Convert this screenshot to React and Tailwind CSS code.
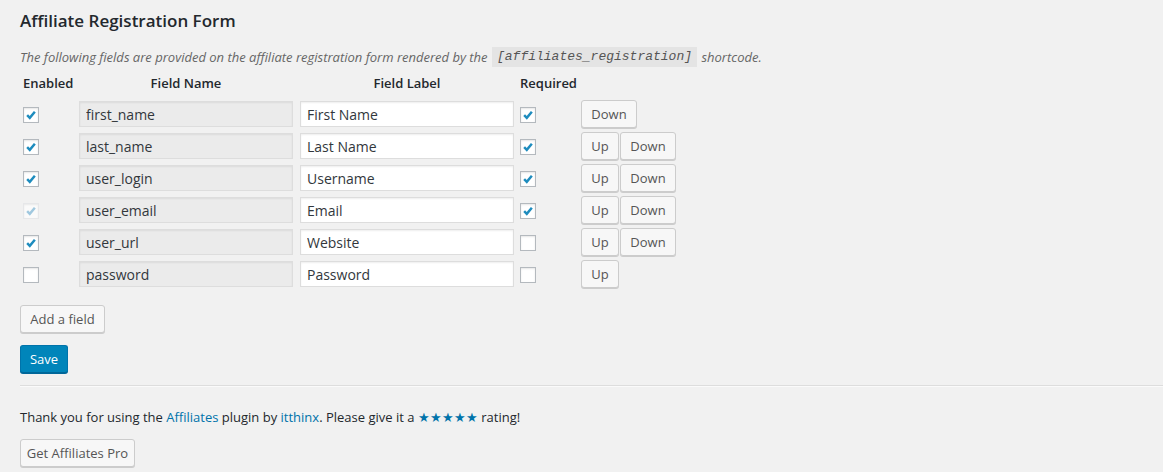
const fields = [
  { name: 'first_name', label: 'First Name', enabled: true, required: true, up: false, down: true },
  { name: 'last_name', label: 'Last Name', enabled: true, required: true, up: true, down: true },
  { name: 'user_login', label: 'Username', enabled: true, required: true, up: true, down: true },
  { name: 'user_email', label: 'Email', enabled: true, required: true, up: true, down: true, locked: true },
  { name: 'user_url', label: 'Website', enabled: true, required: false, up: true, down: true },
  { name: 'password', label: 'Password', enabled: false, required: false, up: true, down: false },
];

const Checkbox = ({ checked, disabled }) => (
  <span
    className={
      'flex h-4 w-4 items-center justify-center border bg-white shadow-[inset_0_1px_2px_rgba(0,0,0,0.1)] ' +
      (disabled ? 'border-[#e2e4e7] bg-[#f4f4f4] opacity-70' : 'border-[#b4b9be]')
    }
  >
    {checked && (
      <svg width="16" height="16" viewBox="0 0 16 16">
        <path
          d="M3.6 8.2 L6.6 11.3 L12.4 4.2"
          fill="none"
          stroke={disabled ? '#7fb8d8' : '#1e8cbe'}
          strokeWidth="2.8"
        />
      </svg>
    )}
  </span>
);

const Button = ({ children, className = '' }) => (
  <button
    type="button"
    className={
      'h-7 rounded-[3px] border border-[#cccccc] bg-[#f7f7f7] text-[13px] leading-[26px] text-[#555] shadow-[0_1px_0_#cccccc] ' +
      className
    }
  >
    {children}
  </button>
);

const App = () => {
  return (
    <div
      className="min-h-screen bg-[#f1f1f1] pl-5 pt-[10px] text-[13px] text-[#444]"
      style={{ fontFamily: '"Open Sans", "Noto Sans", sans-serif' }}
    >
      <h2 className="text-[17px] font-semibold leading-[22px] text-[#23282d]">Affiliate Registration Form</h2>

      <p className="mt-[15px] h-5 leading-5 italic text-[#666]">
        The following fields are provided on the affiliate registration form rendered by the{' '}
        <code
          className="mx-[1px] inline-block bg-[#e4e4e4] px-[5px] align-top text-[13px] leading-5 italic text-[#555]"
          style={{ fontFamily: '"Liberation Mono", monospace' }}
        >
          [affiliates_registration]
        </code>{' '}
        shortcode.
      </p>

      <div className="mt-[5px] flex h-6 items-center font-semibold text-[#23282d]">
        <div className="w-[59px] pl-[3px]">Enabled</div>
        <div className="w-[214px] text-center">Field Name</div>
        <div className="ml-[7px] w-[214px] text-center">Field Label</div>
        <div className="ml-[6px]">Required</div>
      </div>

      <div className="mt-[2px]">
        {fields.map((f) => (
          <div key={f.name} className="flex h-8 items-center">
            <div className="w-[59px] pl-[3px] pt-[2px]">
              <Checkbox checked={f.enabled} disabled={f.locked} />
            </div>
            <input
              readOnly
              value={f.name}
              className="h-[26px] w-[214px] border border-[#dddddd] bg-[#ebebeb] px-[6px] text-[14px] text-[#32373c] shadow-[inset_0_1px_2px_rgba(0,0,0,0.07)] outline-none"
            />
            <input
              readOnly
              value={f.label}
              className="ml-[7px] h-[26px] w-[214px] border border-[#dddddd] bg-white px-[6px] text-[14px] text-[#32373c] shadow-[inset_0_1px_2px_rgba(0,0,0,0.07)] outline-none"
            />
            <div className="ml-[6px] w-[61px] pt-[2px]">
              <Checkbox checked={f.required} />
            </div>
            <div className="flex gap-px">
              {f.up && <Button className="w-[38px]">Up</Button>}
              {f.down && <Button className="w-[56px]">Down</Button>}
            </div>
          </div>
        ))}
      </div>

      <Button className="mt-[15px] block w-[85px]">Add a field</Button>

      <button
        type="button"
        className="mt-3 block h-7 w-12 rounded-[3px] border border-[#0073aa] border-b-[#006799] bg-[#0085ba] text-[13px] leading-[26px] text-white shadow-[0_1px_0_#006799]"
      >
        Save
      </button>

      <div className="mt-3 border-t border-b border-t-[#dddddd] border-b-[#fafafa]" />

      <p className="mt-5 leading-5 text-[#23282d]">
        Thank you for using the <span className="text-[#0073aa]">Affiliates</span> plugin by{' '}
        <span className="text-[#0073aa]">itthinx</span>. Please give it a{' '}
        <span className="text-[#0073aa]">★★★★★</span> rating!
      </p>

      <Button className="mt-3 block w-[115px]">Get Affiliates Pro</Button>
    </div>
  );
};

export default App;
